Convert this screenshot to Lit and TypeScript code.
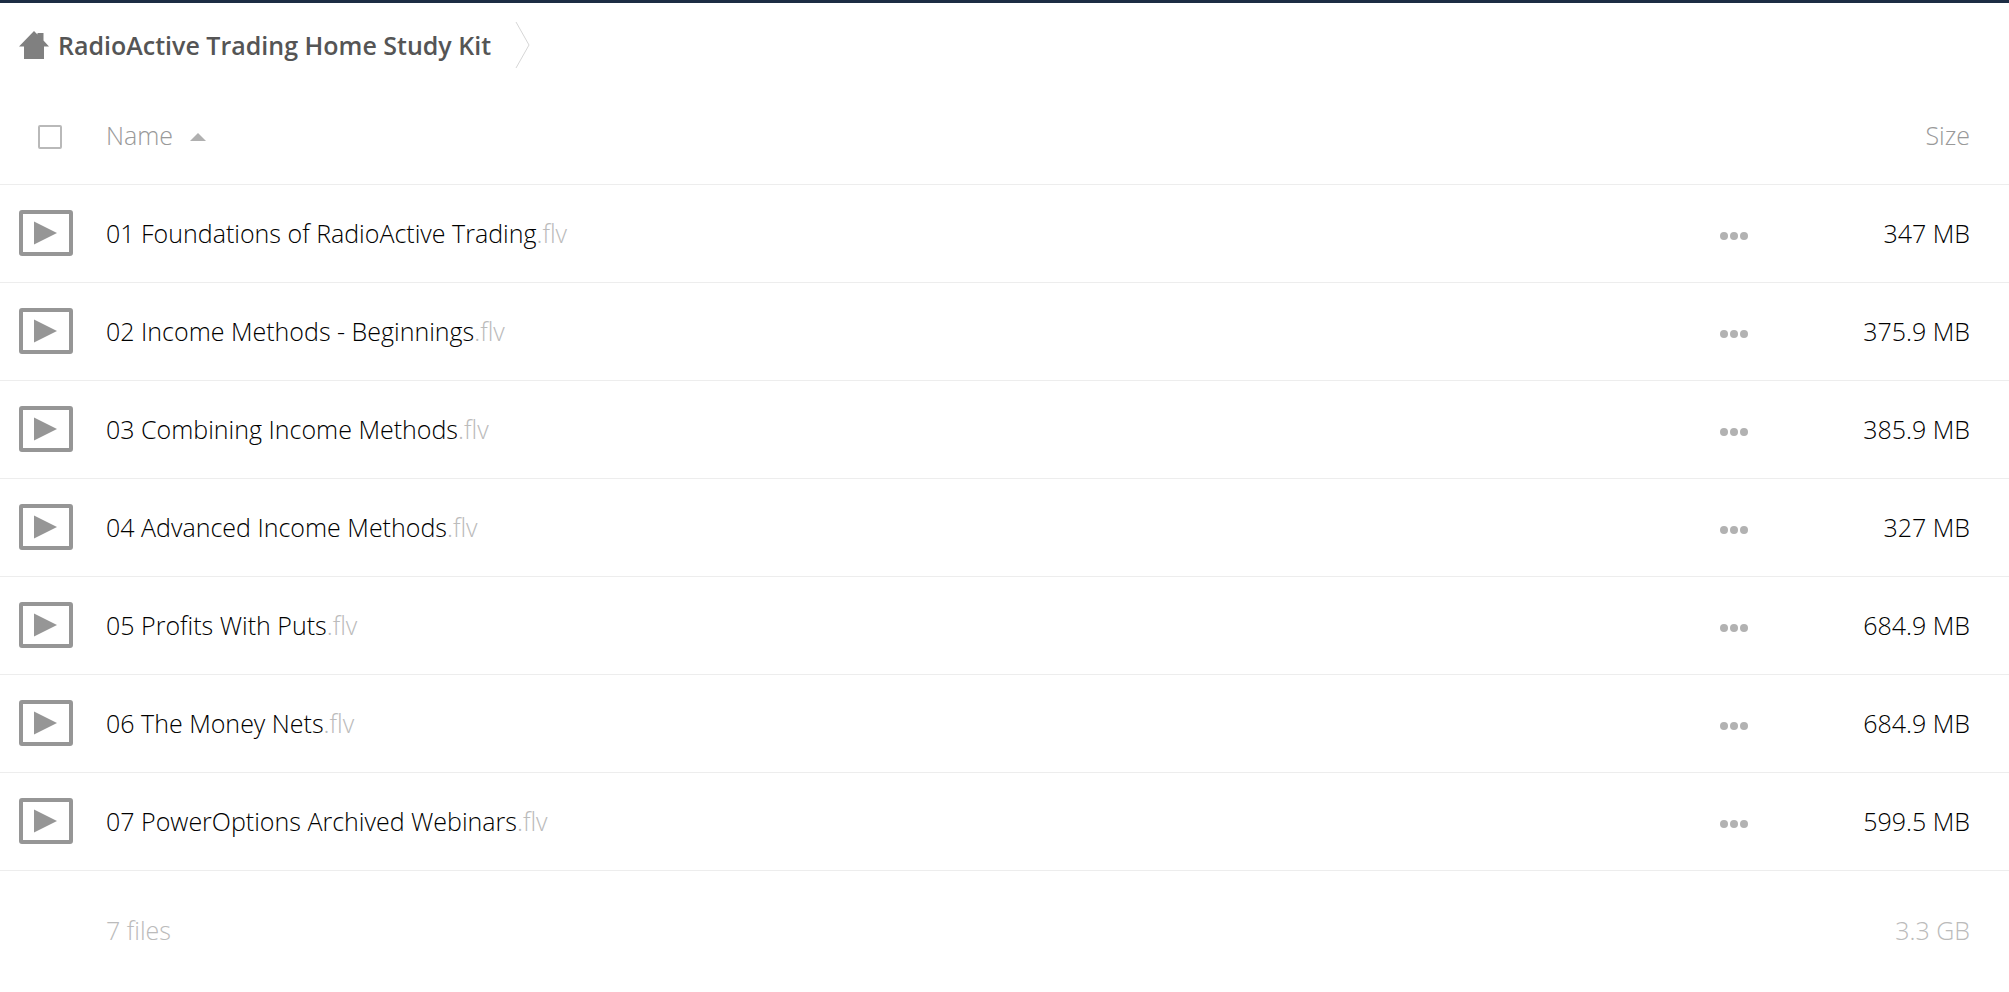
import { LitElement, html, css } from "lit";
import { customElement, state } from "lit/decorators.js";

interface FileEntry {
  name: string;
  ext: string;
  size: string;
}

const FILES: FileEntry[] = [
  { name: "01 Foundations of RadioActive Trading", ext: ".flv", size: "347 MB" },
  { name: "02 Income Methods - Beginnings", ext: ".flv", size: "375.9 MB" },
  { name: "03 Combining Income Methods", ext: ".flv", size: "385.9 MB" },
  { name: "04 Advanced Income Methods", ext: ".flv", size: "327 MB" },
  { name: "05 Profits With Puts", ext: ".flv", size: "684.9 MB" },
  { name: "06 The Money Nets", ext: ".flv", size: "684.9 MB" },
  { name: "07 PowerOptions Archived Webinars", ext: ".flv", size: "599.5 MB" },
];

const homeIcon = html`<svg class="home" viewBox="0 0 30 28" aria-hidden="true">
  <path fill="#808080" d="M15 0 18.500 3.500V2H24.500V9.500L30 15.500H25V28H5V15.500H0Z" />
</svg>`;

const videoIcon = html`<svg class="video" viewBox="0 0 54 46" aria-hidden="true">
  <rect x="2" y="2" width="50" height="42" rx="1" fill="none" stroke="#969696" stroke-width="4" />
  <path fill="#969696" d="M15 11.500 38 23 15 34.500Z" />
</svg>`;

const dotsIcon = html`<svg class="dots" viewBox="0 0 28 8" aria-hidden="true">
  <g fill="#b2b2b2"><circle cx="4" cy="4" r="4" /><circle cx="14" cy="4" r="4" /><circle cx="24" cy="4" r="4" /></g>
</svg>`;

@customElement("app-root")
export class AppRoot extends LitElement {
  static styles = css`
    :host {
      display: block;
      min-height: 100vh;
      box-sizing: border-box;
      border-top: 3px solid #1d2d44;
      background: #fff;
      color: #000;
      font: 300 25px/36px "Open Sans", sans-serif;
    }
    .crumbs {
      display: flex;
      align-items: center;
      height: 84px;
      padding-left: 19px;
    }
    .crumb {
      display: flex;
      align-items: center;
      gap: 9px;
      color: #555;
      font-weight: 600;
      text-decoration: none;
    }
    .home {
      width: 30px;
      height: 28px;
    }
    .arrow {
      width: 15px;
      height: 46px;
      margin-left: 24px;
    }
    .files {
      width: 100%;
      border-collapse: separate;
      border-spacing: 0;
      table-layout: fixed;
    }
    .col-icon { width: 106px; }
    .col-menu { width: 80px; }
    .col-size { width: 209px; }
    th, td {
      box-sizing: border-box;
      height: 98px;
      padding: 0 0 2px;
      border-bottom: 1px solid #ededed;
      text-align: left;
      font-weight: 300;
      vertical-align: middle;
    }
    .size {
      padding-right: 39px;
      text-align: right;
    }
    .head th { color: #999; }
    .check {
      display: block;
      appearance: none;
      box-sizing: border-box;
      width: 24px;
      height: 24px;
      margin: 4px 0 0 38px;
      border: 2px solid #b9b9b9;
      border-radius: 2px;
      background: #fff;
    }
    .check:checked { background: #969696; }
    .sort, .menu {
      display: flex;
      align-items: center;
      padding: 0;
      border: 0;
      background: none;
      color: inherit;
      font: inherit;
      cursor: pointer;
    }
    .sort { gap: 17px; }
    .menu { padding-top: 6px; }
    .caret {
      width: 16px;
      height: 8px;
      margin-top: 4px;
    }
    .video {
      display: block;
      width: 54px;
      height: 46px;
      margin-left: 19px;
    }
    .link {
      color: inherit;
      text-decoration: none;
    }
    .ext { color: #bbb; }
    .dots {
      display: block;
      width: 28px;
      height: 8px;
    }
    .foot td {
      height: 120px;
      border: 0;
      color: #bbb;
    }
  `;

  @state() private descending = false;

  render() {
    const files = this.descending ? [...FILES].reverse() : FILES;
    return html`
      <nav class="crumbs" aria-label="Breadcrumb">
        <a class="crumb" href="#">${homeIcon} RadioActive Trading Home Study Kit</a>
        <svg class="arrow" viewBox="0 0 15 46" aria-hidden="true">
          <path d="M1 0 14 23 1 46" fill="none" stroke="#d6d6d6" />
        </svg>
      </nav>
      <table class="files">
        <colgroup>
          <col class="col-icon" /><col /><col class="col-menu" /><col class="col-size" />
        </colgroup>
        <thead>
          <tr class="head">
            <th><input class="check" type="checkbox" aria-label="Select all" /></th>
            <th>
              <button class="sort" @click=${() => (this.descending = !this.descending)}>
                Name
                <svg class="caret" viewBox="0 0 16 8" aria-hidden="true"><path d="M0 8 8 0 16 8Z" fill="#b0b0b0" /></svg>
              </button>
            </th>
            <th></th>
            <th class="size">Size</th>
          </tr>
        </thead>
        <tbody>
          ${files.map(
            (f) => html`<tr>
              <td>${videoIcon}</td>
              <td><a class="link" href="#">${f.name}<span class="ext">${f.ext}</span></a></td>
              <td><button class="menu" aria-label="Actions for ${f.name}">${dotsIcon}</button></td>
              <td class="size">${f.size}</td>
            </tr>`
          )}
        </tbody>
        <tfoot>
          <tr class="foot">
            <td></td>
            <td>${FILES.length} files</td>
            <td></td>
            <td class="size">3.3 GB</td>
          </tr>
        </tfoot>
      </table>
    `;
  }
}
